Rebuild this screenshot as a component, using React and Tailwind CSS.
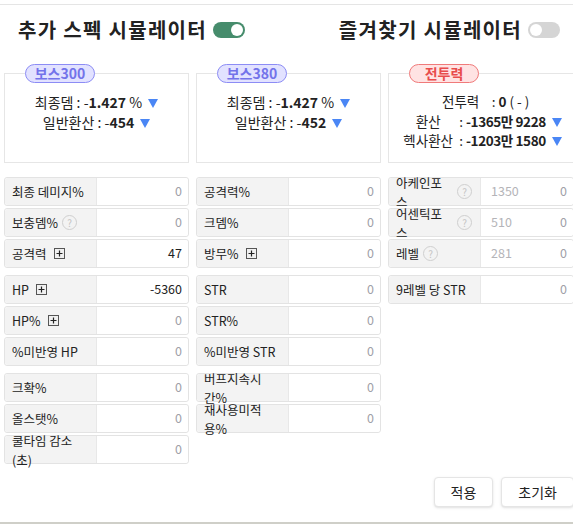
import React from 'react';

const Tri = () => (
  <svg width="10" height="9" viewBox="0 0 10 9" className="inline-block ml-[6px] mt-[2px]">
    <path d="M0 0h10L5 9z" fill="#4a86f5" />
  </svg>
);

const Help = () => (
  <span className="shrink-0 w-[15px] h-[15px] rounded-full border border-[#cfcfcf] text-[#c4c4c4] text-[10px] leading-[13px] flex items-center justify-center">
    ?
  </span>
);

const PlusBox = () => (
  <svg width="11" height="11" viewBox="0 0 11 11" className="shrink-0 ml-[3px]">
    <rect x="0.5" y="0.5" width="10" height="10" fill="#f0f0f0" stroke="#555" />
    <path d="M5.5 2.5v6M2.5 5.5h6" stroke="#222" strokeWidth="1.2" />
  </svg>
);

const Row = ({ label, icon, value, dark, base }) => (
  <div className="flex h-[29px] border border-[#e3e3e3] rounded-[3px]">
    <div className="w-[92px] shrink-0 bg-[#f3f3f3] rounded-l-[3px] border-r border-[#e8e8e8] flex items-center pl-[7px] pr-[8px] gap-[4px] leading-[19px] text-[#222]">
      <span>{label}</span>
      {icon}
    </div>
    <div className="flex-1 bg-white rounded-r-[3px] flex items-center pr-[6px]">
      {base !== undefined && <span className="pl-[10px] text-[#b4b4b8]">{base}</span>}
      <span className={`ml-auto ${dark ? 'text-[#222]' : 'text-[#a0a0a8]'}`}>{value}</span>
    </div>
  </div>
);

const Group = ({ children }) => <div className="flex flex-col gap-[2px]">{children}</div>;

const Card = ({ badge, red, children }) => (
  <div className="relative h-[90px] border border-[#e6e6e6] pt-[18px] text-[14px] leading-[20px] text-[#222]">
    <div
      className={`absolute top-[-10px] left-[20px] w-[70px] h-[19px] rounded-full border flex items-center justify-center font-bold text-[14px] leading-[17px] ${
        red ? 'bg-[#ffe3e3] border-[#f07a7a] text-[#e84c4c]' : 'bg-[#e2e2ff] border-[#8c8cf5] text-[#7373ea]'
      }`}
    >
      {badge}
    </div>
    {children}
  </div>
);

export default function App() {
  return (
    <div className="w-[573px] h-[524px] overflow-hidden bg-white" style={{ fontFamily: '"Noto Sans CJK KR", "Noto Sans", sans-serif' }}>
      <div className="w-[578px] pt-[4px]">
        <div className="border-t border-[#e5e5e5]" />
        <div className="h-[50px] flex items-center justify-between pl-[18px] pr-[18px]">
          <div className="flex items-center gap-[6px]">
            <span className="text-[20px] font-bold tracking-[1.3px] text-[#222]">추가 스펙 시뮬레이터</span>
            <span className="w-[32px] h-[16px] rounded-full bg-[#468c6c] flex items-center justify-end pr-[2px]">
              <span className="w-[12px] h-[12px] rounded-full bg-white" />
            </span>
          </div>
          <div className="flex items-center gap-[6px]">
            <span className="text-[20px] font-bold tracking-[1.3px] text-[#222]">즐겨찾기 시뮬레이터</span>
            <span className="w-[32px] h-[16px] rounded-full bg-[#d5d5d5] flex items-center pl-[2px]">
              <span className="w-[12px] h-[12px] rounded-full bg-white" />
            </span>
          </div>
        </div>

        <div className="px-[4px]">
          <div className="mt-[18px] grid grid-cols-[185px_185px_186px] gap-x-[7px]">
            <Card badge="보스300">
              <div className="flex items-center justify-center">
                최종뎀 : -<b>1.427</b>&nbsp;%<Tri />
              </div>
              <div className="flex items-center justify-center">
                일반환산 : -<b>454</b><Tri />
              </div>
            </Card>
            <Card badge="보스380">
              <div className="flex items-center justify-center">
                최종뎀 : -<b>1.427</b>&nbsp;%<Tri />
              </div>
              <div className="flex items-center justify-center">
                일반환산 : -<b>452</b><Tri />
              </div>
            </Card>
            <Card badge="전투력" red>
              <div className="flex flex-col items-center text-[13.5px] leading-[19.5px]">
                <div className="flex items-center">
                  <span className="w-[56px] text-center">전투력</span>
                  <span className="ml-[3px] whitespace-pre">: <b>0</b> ( - )</span>
                </div>
                <div className="flex items-center">
                  <span className="w-[56px] text-center">환산</span>
                  <span className="ml-[3px] whitespace-pre">: <b className="tracking-[-0.4px]">-1365만 9228</b></span>
                  <Tri />
                </div>
                <div className="flex items-center">
                  <span className="w-[56px] text-center">헥사환산</span>
                  <span className="ml-[3px] whitespace-pre">: <b className="tracking-[-0.4px]">-1203만 1580</b></span>
                  <Tri />
                </div>
              </div>
            </Card>
          </div>

          <div className="mt-[14px] grid grid-cols-[185px_185px_186px] gap-x-[7px] items-start text-[12.5px]">
            <div className="flex flex-col gap-[7px]">
              <Group>
                <Row label="최종 데미지%" value="0" />
                <Row label="보충뎀%" icon={<Help />} value="0" />
                <Row label="공격력" icon={<PlusBox />} value="47" dark />
              </Group>
              <Group>
                <Row label="HP" icon={<PlusBox />} value="-5360" dark />
                <Row label="HP%" icon={<PlusBox />} value="0" />
                <Row label="%미반영 HP" value="0" />
              </Group>
              <Group>
                <Row label="크확%" value="0" />
                <Row label="올스탯%" value="0" />
                <Row label="쿨타임 감소 (초)" value="0" />
              </Group>
            </div>
            <div className="flex flex-col gap-[7px]">
              <Group>
                <Row label="공격력%" value="0" />
                <Row label="크뎀%" value="0" />
                <Row label="방무%" icon={<PlusBox />} value="0" />
              </Group>
              <Group>
                <Row label="STR" value="0" />
                <Row label="STR%" value="0" />
                <Row label="%미반영 STR" value="0" />
              </Group>
              <Group>
                <Row label="버프지속시간%" value="0" />
                <Row label="재사용미적용%" value="0" />
              </Group>
            </div>
            <div className="flex flex-col gap-[7px]">
              <Group>
                <Row label="아케인포스" icon={<Help />} base="1350" value="0" />
                <Row label="어센틱포스" icon={<Help />} base="510" value="0" />
                <Row label="레벨" icon={<Help />} base="281" value="0" />
              </Group>
              <Group>
                <Row label={<span className="whitespace-nowrap">9레벨 당 STR</span>} value="0" />
              </Group>
            </div>
          </div>

          <div className="mt-[13px] flex justify-end gap-[8px] text-[14px] text-[#222]">
            <button className="h-[30px] px-[16px] border border-[#e5e5e5] rounded-[4px] bg-white shadow-sm">적용</button>
            <button className="h-[30px] px-[16px] border border-[#e5e5e5] rounded-[4px] bg-white shadow-sm">초기화</button>
          </div>
        </div>
        <div className="mt-[15px] h-[2px] bg-[#cfcfc8]" />
      </div>
    </div>
  );
}
